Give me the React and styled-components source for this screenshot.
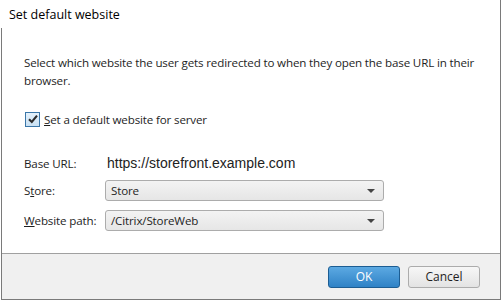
import React from 'react';
import styled, { createGlobalStyle } from 'styled-components';

const Global = createGlobalStyle`
	html, body {
		margin: 0;
		padding: 0;
		background: #fff;
	}
	body {
		font-family: "Open Sans", "Noto Sans", "DejaVu Sans", sans-serif;
		color: #1e1e1e;
	}
`;

const Window = styled.div`
	width: 501px;
	height: 300px;
	display: flex;
	flex-direction: column;
	border-right: 1px solid #7a7a7a;
	box-sizing: border-box;
`;
const Title = styled.div`
	height: 28px;
	padding: 6px 0 0 9px;
	box-sizing: border-box;
	font-size: 12.5px;
	color: #000;
`;
const Body = styled.div`
	flex: 1;
	display: flex;
	flex-direction: column;
	margin-left: 1px;
	border-left: 1px solid #7a7a7a;
	border-bottom: 1px solid #7a7a7a;
`;
const Content = styled.div`
	flex: 1;
	padding: 26px 0 0 22px;
	font-size: 11.6px;
	letter-spacing: -0.15px;
`;
const Intro = styled.p`
	margin: 0;
	width: 476px;
	line-height: 17.5px;
`;
const CheckRow = styled.label`
	display: flex;
	align-items: center;
	gap: 4px;
	height: 16px;
	margin-top: 22px;
	padding-left: 1px;
`;
const Check = styled.span`
	width: 13px;
	height: 13px;
	border: 1px solid #3a76a8;
	background: linear-gradient(#e4f1fb, #c9e1f4);
	display: flex;
	align-items: center;
	justify-content: center;
`;
const Form = styled.div`
	display: grid;
	grid-template-columns: 81px 279px;
	grid-template-rows: 28px 21px 21px;
	row-gap: 9px;
	align-items: center;
	margin-top: 16px;
`;
const Label = styled.span`
	align-self: ${p => (p.$bottom ? 'end' : 'center')};
`;
const Url = styled.span`
	align-self: end;
	font-family: "Liberation Sans", Arial, sans-serif;
	font-size: 14px;
	letter-spacing: 0;
	padding-left: 2px;
	color: #222;
`;
const SelectBox = styled.div`
	height: 21px;
	box-sizing: border-box;
	border: 1px solid #acacac;
	border-radius: 3px;
	background: linear-gradient(#f3f3f3, #e6e6e6);
	display: flex;
	align-items: center;
	justify-content: space-between;
	padding: 0 8px 0 5px;
`;
const Arrow = styled.span`
	width: 0;
	height: 0;
	border-left: 4px solid transparent;
	border-right: 4px solid transparent;
	border-top: 4px solid #444;
`;
const Footer = styled.div`
	height: 46px;
	box-sizing: border-box;
	background: #f0f0f0;
	border-top: 1px solid #a0a0a0;
	display: flex;
	justify-content: flex-end;
	align-items: center;
	gap: 8px;
	padding: 0 20px 0 0;
`;
const Button = styled.button`
	width: 72px;
	height: 22px;
	border-radius: 3px;
	font-family: "Open Sans", "Noto Sans", sans-serif;
	font-size: 12px;
	padding: 0;
	border: 1px solid ${p => (p.$primary ? '#1c5d93' : '#acacac')};
	color: ${p => (p.$primary ? '#fff' : '#1e1e1e')};
	background: ${p => (p.$primary
		? 'linear-gradient(#5ca9e2, #2f82c6)'
		: 'linear-gradient(#f7f7f7, #e3e3e3)')};
`;

const Select = ({ value }) => (
	<SelectBox>
		<span>{value}</span>
		<Arrow />
	</SelectBox>
);

const App = () => {
	return (
		<Window>
			<Global />
			<Title>Set default website</Title>
			<Body>
				<Content>
					<Intro>
						Select which website the user gets redirected to when they open the base URL in their browser.
					</Intro>
					<CheckRow>
						<Check>
							<svg width="12" height="12" viewBox="0 0 12 12">
								<path d="M2 6.2 L4.8 9 L10 2.6" fill="none" stroke="#2b2b2b" strokeWidth="2.1" />
							</svg>
						</Check>
						<span><u>S</u>et a default website for server</span>
					</CheckRow>
					<Form>
						<Label $bottom>Base URL:</Label>
						<Url>https://storefront.example.com</Url>
						<Label>S<u>t</u>ore:</Label>
						<Select value="Store" />
						<Label><u>W</u>ebsite path:</Label>
						<Select value="/Citrix/StoreWeb" />
					</Form>
				</Content>
				<Footer>
					<Button $primary>OK</Button>
					<Button>Cancel</Button>
				</Footer>
			</Body>
		</Window>
	);
};

export default App;
